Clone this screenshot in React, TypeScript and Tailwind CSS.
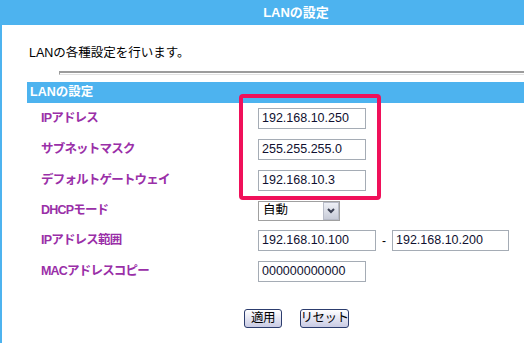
import React from "react";

const font = { fontFamily: '"Liberation Sans", "Noto Sans CJK JP", sans-serif' };

function Field({ value, w = 108 }: { value: string; w?: number }) {
  return (
    <div
      className="h-[21px] border border-[#a5acb5] bg-white flex items-center pl-[3px] text-[12.5px] text-[#101030] leading-none whitespace-nowrap"
      style={{ width: w }}
    >
      {value}
    </div>
  );
}

function Label({ children }: { children: React.ReactNode }) {
  return (
    <div className="w-[231px] shrink-0 pl-[14px] text-[12.5px] font-bold text-[#9a2fa8] tracking-[-0.8px] leading-none whitespace-nowrap">
      {children}
    </div>
  );
}

function Btn({ children, w }: { children: React.ReactNode; w: number }) {
  return (
    <div
      className="h-[19px] rounded-[3px] border border-[#2c3d6e] bg-gradient-to-b from-white to-[#c9cbe4] flex items-center justify-center text-[12.5px] text-black leading-none whitespace-nowrap tracking-[-0.5px]"
      style={{ width: w }}
    >
      {children}
    </div>
  );
}

export default function App() {
  return (
    <div className="relative w-[524px] h-[343px] bg-white overflow-hidden" style={font}>
      <div className="h-[25px] bg-[#4db3ef] flex items-center justify-center pl-[68px] text-white font-bold text-[13px]">
        LANの設定
      </div>
      <div className="border-l-2 border-[#4db3ef] h-[318px]">
        <div className="pl-[27px] pt-[22px] text-[12.5px] text-black leading-none h-[46px]">
          LANの各種設定を行います。
        </div>
        <div className="ml-[57px] h-[4px] border-t-2 border-l border-[#9c9c9c] border-b border-b-[#e2e2e2]" />
        <div className="ml-[25px] mt-[7px] h-[21px] bg-[#4db3ef] flex items-center pl-[3px] text-white font-bold text-[12.5px] leading-none">
          LANの設定
        </div>
        <div className="ml-[25px]">
          <div className="h-[31px] flex items-center">
            <Label>IPアドレス</Label>
            <Field value="192.168.10.250" />
          </div>
          <div className="h-[31px] flex items-center">
            <Label>サブネットマスク</Label>
            <Field value="255.255.255.0" />
          </div>
          <div className="h-[31px] flex items-center">
            <Label>デフォルトゲートウェイ</Label>
            <Field value="192.168.10.3" />
          </div>
          <div className="h-[29px] flex items-center">
            <Label>DHCPモード</Label>
            <div className="w-[82px] h-[20px] border border-[#a0a0a0] bg-white flex items-center">
              <div className="flex-1 pl-[4px] text-[12.5px] text-black leading-none">自動</div>
              <div className="w-[16px] h-[18px] border border-[#b8bcc8] bg-gradient-to-b from-[#eef0f6] to-[#c8ccd8] flex items-center justify-center">
                <svg width="8" height="6" viewBox="0 0 8 6">
                  <path d="M1 1 L4 4 L7 1" stroke="#3a3f52" strokeWidth="2" fill="none" />
                </svg>
              </div>
            </div>
          </div>
          <div className="h-[31px] flex items-center">
            <Label>IPアドレス範囲</Label>
            <Field value="192.168.10.100" w={118} />
            <div className="w-[16px] text-center text-[12px] text-black">-</div>
            <Field value="192.168.10.200" w={117} />
          </div>
          <div className="h-[31px] flex items-center">
            <Label>MACアドレスコピー</Label>
            <Field value="000000000000" />
          </div>
        </div>
        <div className="mt-[22px] ml-[242px] flex gap-[18px]">
          <Btn w={38}>適用</Btn>
          <Btn w={49}>リセット</Btn>
        </div>
      </div>
      <div className="absolute left-[239px] top-[94px] w-[142px] h-[106px] border-[4px] border-[#f0105a] rounded-[4px]" />
    </div>
  );
}
